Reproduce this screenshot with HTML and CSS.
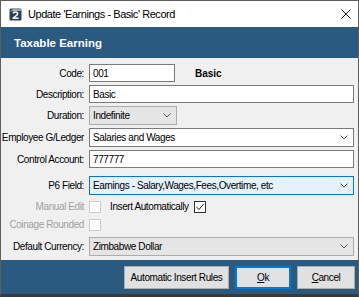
FILE: index.html
```html
<!DOCTYPE html>
<html>
<head>
<meta charset="utf-8">
<link rel="stylesheet" href="styles.css">
</head>
<body>
<div class="window">
  <div class="titlebar">
    <svg class="appicon" width="13" height="13" viewBox="0 0 13 13">
      <rect x="0.5" y="0.5" width="12" height="12" rx="1.5" fill="#2b3f5c"/>
      <path d="M0.5 4 L4 0.5 L12.5 0.5 L12.5 3 L3 3 Z" fill="#9aa6b4"/>
      <path d="M4 5.2 Q5.5 3.6 7.6 4.2 Q9.4 5 8 7 L4.2 10.2 L9.6 10.2" fill="none" stroke="#ffffff" stroke-width="1.6" stroke-linejoin="round"/>
    </svg>
    <span class="title">Update 'Earnings - Basic' Record</span>
    <svg class="close" width="10" height="10" viewBox="0 0 10 10">
      <path d="M0.5 0.5 L9.5 9.5 M9.5 0.5 L0.5 9.5" stroke="#1a1a1a" stroke-width="1" fill="none"/>
    </svg>
  </div>
  <div class="header">Taxable Earning</div>
  <div class="form">
    <div class="row r-code">
      <label class="lbl">Code:</label>
      <div class="txt w-code">001</div>
      <span class="strong">Basic</span>
    </div>
    <div class="row r-desc">
      <label class="lbl">Description:</label>
      <div class="txt grow">Basic</div>
    </div>
    <div class="row r-dur">
      <label class="lbl">Duration:</label>
      <div class="combo flat w-dur"><span>Indefinite</span><svg class="chev" width="8" height="5" viewBox="0 0 8 5"><path d="M0.5 0.5 L4 4 L7.5 0.5" stroke="#555" fill="none"/></svg></div>
    </div>
    <div class="row r-gl">
      <label class="lbl">Employee G/Ledger</label>
      <div class="combo edit grow"><span>Salaries and Wages</span><svg class="chev" width="8" height="5" viewBox="0 0 8 5"><path d="M0.5 0.5 L4 4 L7.5 0.5" stroke="#555" fill="none"/></svg></div>
    </div>
    <div class="row r-ctl">
      <label class="lbl">Control Account:</label>
      <div class="txt grow">777777</div>
    </div>
    <div class="row r-p6">
      <label class="lbl">P6 Field:</label>
      <div class="combo focus grow"><span>Earnings - Salary,Wages,Fees,Overtime, etc</span><svg class="chev" width="8" height="5" viewBox="0 0 8 5"><path d="M0.5 0.5 L4 4 L7.5 0.5" stroke="#555" fill="none"/></svg></div>
    </div>
    <div class="row r-chk">
      <label class="lbl dis">Manual Edit</label>
      <span class="box disbox"></span>
      <span class="chklbl">Insert Automatically</span>
      <span class="box on"><svg width="10" height="10" viewBox="0 0 10 10"><path d="M1.5 5 L4 7.5 L8.8 1.8" stroke="#222" stroke-width="1" fill="none"/></svg></span>
    </div>
    <div class="row r-coin">
      <label class="lbl dis">Coinage Rounded</label>
      <span class="box disbox"></span>
    </div>
    <div class="row r-cur">
      <label class="lbl">Default Currency:</label>
      <div class="combo flat grow"><span>Zimbabwe Dollar</span><svg class="chev" width="8" height="5" viewBox="0 0 8 5"><path d="M0.5 0.5 L4 4 L7.5 0.5" stroke="#555" fill="none"/></svg></div>
    </div>
  </div>
  <div class="footer">
    <button class="btn b-auto">Automatic Insert Rules</button>
    <button class="btn b-ok def"><u>O</u>k</button>
    <button class="btn b-cancel"><u>C</u>ancel</button>
  </div>
</div>
</body>
</html>
```
FILE: styles.css
```css
* { box-sizing: border-box; }
html, body { margin: 0; padding: 0; }
body {
  width: 359px;
  height: 297px;
  overflow: hidden;
  background: #3a3a3a;
  font-family: "Liberation Sans", Arial, sans-serif;
  font-size: 10px;
  letter-spacing: -0.4px;
  color: #000;
}
.window {
  width: 359px;
  height: 297px;
  border: 1px solid #5e5e5e;
  border-bottom: 3px solid #3a3a3a;
  display: flex;
  flex-direction: column;
  background: #f0f0f0;
}
.titlebar {
  height: 26px;
  background: #ffffff;
  display: flex;
  align-items: center;
  padding-left: 8px;
  padding-right: 7px;
  flex: none;
}
.appicon { flex: none; }
.title {
  margin-left: 6px;
  font-size: 11px;
  letter-spacing: -0.45px;
  color: #000;
  flex: 1;
}
.close { flex: none; }
.header {
  height: 31px;
  flex: none;
  background: #2b5a80;
  color: #fff;
  font-weight: bold;
  font-size: 11.5px;
  letter-spacing: 0;
  display: flex;
  align-items: center;
  padding-left: 13px;
}
.form {
  flex: 1;
  padding: 6px 4px 0 0;
  display: flex;
  flex-direction: column;
}
.row {
  display: flex;
  align-items: center;
}
.lbl {
  width: 83px;
  flex: none;
  text-align: right;
  margin-right: 5px;
  white-space: nowrap;
}
.lbl.dis { color: #a0a0a0; }
.r-code { height: 18px; }
.r-desc { height: 18px; margin-top: 3px; }
.r-dur { height: 19px; margin-top: 3px; }
.r-gl { height: 19px; margin-top: 3px; }
.r-ctl { height: 18px; margin-top: 3px; }
.r-p6 { height: 19px; margin-top: 8px; }
.r-chk { height: 13px; margin-top: 5px; }
.r-coin { height: 13px; margin-top: 5px; }
.r-cur { height: 19px; margin-top: 6px; }
.txt {
  height: 100%;
  border: 1px solid #7a7a7a;
  background: #fff;
  padding-left: 3px;
  display: flex;
  align-items: center;
}
.grow { flex: 1; }
.w-code { width: 86px; flex: none; }
.w-dur { width: 88px; flex: none; }
.strong {
  font-weight: bold;
  letter-spacing: 0;
  margin-left: 20px;
}
.combo {
  height: 100%;
  display: flex;
  align-items: center;
  justify-content: space-between;
  padding-left: 3px;
  padding-right: 5px;
}
.combo.flat { background: #e5e5e5; border: 1px solid #adadad; }
.combo.edit { background: #fff; border: 1px solid #7a7a7a; }
.combo.focus { background: #e5f1fb; border: 1px solid #0078d7; }
.chev { flex: none; }
.box {
  width: 12px;
  height: 12px;
  flex: none;
  background: #fff;
  display: flex;
  align-items: center;
  justify-content: center;
}
.disbox { border: 1px solid #cccccc; }
.on { border: 1px solid #333333; margin-left: 5px; }
.chklbl { margin-left: 9px; }
.footer {
  height: 34px;
  flex: none;
  background: #2b5a80;
  display: flex;
  justify-content: flex-end;
  align-items: flex-start;
  padding: 6px 3px 0 0;
  gap: 6px;
}
.btn {
  height: 23px;
  background: #e1e1e1;
  border: 1px solid #adadad;
  font-family: "Liberation Sans", Arial, sans-serif;
  font-size: 10px;
  letter-spacing: -0.4px;
  color: #000;
  padding: 0;
  margin: 0;
}
.b-auto { width: 105px; }
.b-ok { width: 56px; }
.b-cancel { width: 58px; }
.def { border: 2px solid #0078d7; }
```
